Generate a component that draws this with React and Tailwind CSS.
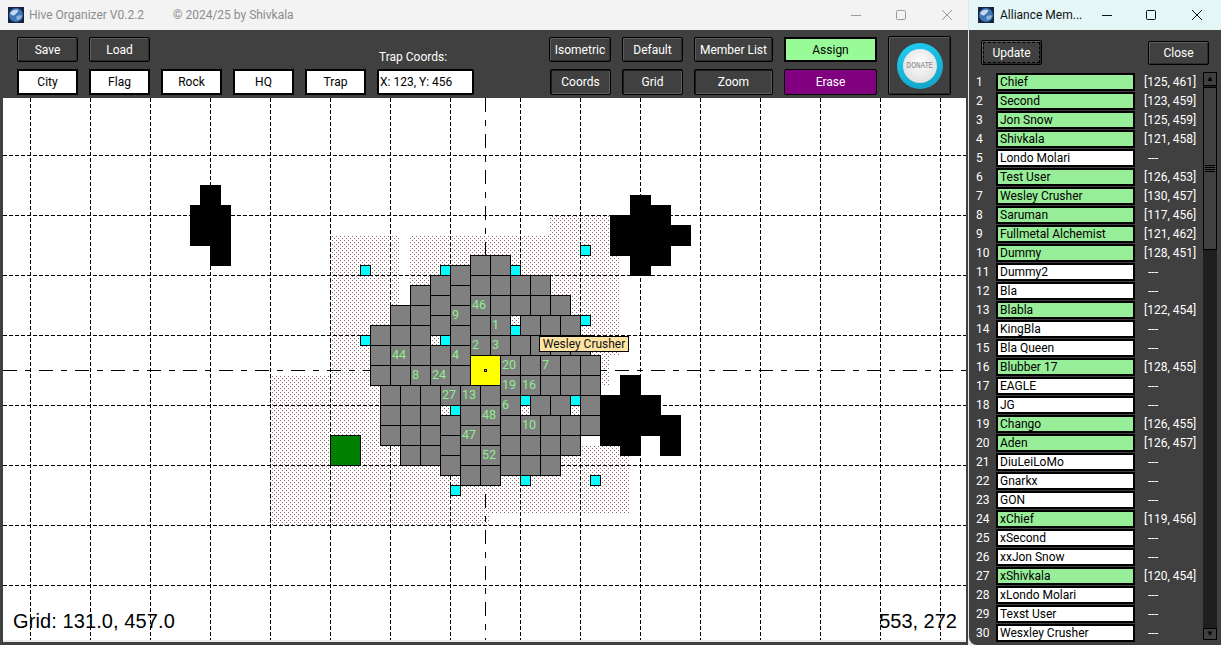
import React from 'react';

const members = [
  ['Chief', '[125, 461]'], ['Second', '[123, 459]'], ['Jon Snow', '[125, 459]'], ['Shivkala', '[121, 458]'],
  ['Londo Molari', null], ['Test User', '[126, 453]'], ['Wesley Crusher', '[130, 457]'], ['Saruman', '[117, 456]'],
  ['Fullmetal Alchemist', '[121, 462]'], ['Dummy', '[128, 451]'], ['Dummy2', null], ['Bla', null],
  ['Blabla', '[122, 454]'], ['KingBla', null], ['Bla Queen', null], ['Blubber 17', '[128, 455]'],
  ['EAGLE', null], ['JG', null], ['Chango', '[126, 455]'], ['Aden', '[126, 457]'],
  ['DiuLeiLoMo', null], ['Gnarkx', null], ['GON', null], ['xChief', '[119, 456]'],
  ['xSecond', null], ['xxJon Snow', null], ['xShivkala', '[120, 454]'], ['xLondo Molari', null],
  ['Texst User', null], ['Wesxley Crusher', null],
];

// grey cells of the hive: [x, y of the first cell, number of cells] per column
const columns = [
  [370, 325, 3], [390, 305, 4], [410, 285, 5], [430, 275, 3], [430, 345, 2], [450, 265, 6],
  [470, 255, 5], [490, 255, 5],
  [510, 275, 2], [530, 275, 2], [510, 335, 1], [530, 295, 1], [550, 295, 1],
  [520, 315, 1], [540, 315, 1], [560, 315, 1], [530, 335, 1], [550, 335, 1], [570, 335, 1],
  [500, 355, 6], [520, 355, 2], [540, 355, 2], [560, 355, 2], [580, 355, 3],
  [530, 395, 1], [550, 395, 1], [520, 415, 3], [540, 415, 3], [560, 415, 2], [580, 415, 1],
  [380, 385, 3], [400, 385, 4], [420, 385, 4], [440, 385, 1], [440, 415, 3],
  [460, 385, 1], [480, 385, 1], [460, 405, 4], [480, 405, 4],
];
const cells = columns.flatMap(([x, y, n]) => Array.from({ length: n }, (_, i) => [x, y + i * 20]));

const labels = [
  ['46', 470, 295], ['9', 450, 305], ['1', 490, 315], ['2', 470, 335], ['3', 490, 335], ['44', 390, 345],
  ['4', 450, 345], ['8', 410, 365], ['24', 430, 365], ['20', 500, 355], ['7', 540, 355], ['19', 500, 375],
  ['16', 520, 375], ['27', 440, 385], ['13', 460, 385], ['6', 500, 395], ['48', 480, 405], ['10', 520, 415],
  ['47', 460, 425], ['52', 480, 445],
];

const traps = [
  [360, 265], [360, 335], [440, 265], [510, 265], [580, 245], [580, 315], [510, 325], [440, 335],
  [520, 395], [570, 395], [450, 405], [520, 475], [450, 485], [590, 475],
];

const dotted = [
  [330, 235, 69, 140], [410, 235, 140, 70], [390, 305, 160, 70], [550, 215, 60, 40], [550, 255, 69, 100],
  [590, 355, 20, 30], [270, 375, 219, 150], [489, 385, 91, 129], [580, 445, 49, 69],
];

const rocks = [
  'M200 185h21v20h10v61h-21v-20h-20v-41h10z',
  'M630 195h21v10h20v20h20v21h-20v20h-20v10h-21v-20h-20v-41h20z',
  'M620 375h21v20h20v20h20v41h-21v-20h-19v20h-21v-10h-20v-51h20z',
];

const vLines = [30, 90, 150, 210, 270, 330, 390, 450, 520, 580, 640, 700, 760, 820, 880, 940];
const hLines = [155, 215, 275, 335, 405, 465, 525, 585];

const darkBtn = 'flex items-center justify-center bg-[#404040] text-white border border-black rounded-[2px] shadow-[inset_1px_1px_0_#5c5c5c,inset_-1px_-1px_0_#2a2a2a]';
const pressedBtn = 'flex items-center justify-center bg-[#404040] text-white border border-black rounded-[2px] shadow-[inset_1px_1px_0_#1c1c1c,inset_-1px_-1px_0_#5c5c5c]';
const whiteBtn = 'flex items-center justify-center bg-white text-black border-2 border-black';

function Globe() {
  return (
    <svg width="16" height="16" viewBox="0 0 16 16" className="shrink-0">
      <rect width="16" height="16" fill="#16243f" />
      <circle cx="8" cy="8" r="7" fill="#3f76b8" />
      <path d="M2 6c2-3 5-4 8-3 1 2-2 3-3 5-2 1-4 0-5-2z" fill="#c4d8ee" />
      <path d="M9 9c2-1 4-1 5 0-1 3-3 4-5 4-1-1-1-3 0-4z" fill="#8fb2d8" />
    </svg>
  );
}

function WinControls({ color, firstGap, secondGap }) {
  return (
    <div className="flex items-center">
      <svg width="10" height="10" viewBox="0 0 10 10"><path d="M0 5.5h10" stroke={color} /></svg>
      <svg width="10" height="10" viewBox="0 0 10 10" className={firstGap}><rect x=".5" y=".5" width="9" height="9" rx="1" fill="none" stroke={color} /></svg>
      <svg width="10" height="10" viewBox="0 0 10 10" className={secondGap}><path d="M0 0l10 10M10 0L0 10" stroke={color} /></svg>
    </div>
  );
}

function HiveMap() {
  return (
    <svg width="963" height="542" viewBox="3 98 963 542" className="block">
      <defs>
        <pattern id="stipple" width="4" height="4" patternUnits="userSpaceOnUse">
          <rect x="0" y="0" width="1" height="1" fill="#8f6467" />
          <rect x="2" y="2" width="1" height="1" fill="#8f6467" />
        </pattern>
      </defs>
      {dotted.map(([x, y, w, h], i) => (
        <rect key={i} x={x} y={y} width={w} height={h} fill="url(#stipple)" />
      ))}
      {vLines.map((x) => (
        <line key={x} x1={x + 0.5} x2={x + 0.5} y1="98" y2="640" stroke="#000" strokeDasharray="4 2" />
      ))}
      {hLines.map((y) => (
        <line key={y} x1="3" x2="966" y1={y + 0.5} y2={y + 0.5} stroke="#000" strokeDasharray="4 2" />
      ))}
      <line x1="485.5" x2="485.5" y1="98" y2="640" stroke="#000" strokeDasharray="14 8 6 8" />
      <line x1="3" x2="966" y1="370.5" y2="370.5" stroke="#000" strokeDasharray="14 8 6 8" />
      {cells.map(([x, y], i) => (
        <rect key={i} x={x + 0.5} y={y + 0.5} width="20" height="20" fill="#808080" stroke="#000" />
      ))}
      {traps.map(([x, y], i) => (
        <rect key={i} x={x + 0.5} y={y + 0.5} width="10" height="10" fill="#00ffff" stroke="#000" />
      ))}
      <rect x="330.5" y="435.5" width="30" height="30" fill="#008000" stroke="#000" />
      <rect x="470.5" y="355.5" width="30" height="30" fill="#ffff00" stroke="#000" />
      <rect x="484.5" y="369.5" width="2" height="2" fill="#ffff00" stroke="#000" />
      {rocks.map((d, i) => (
        <path key={i} d={d} fill="#000" />
      ))}
      {labels.map(([t, x, y]) => (
        <text key={t} x={x + 2} y={y + 14} fill="#90ee90" fontSize="12.5" fontFamily="Roboto, sans-serif">{t}</text>
      ))}
    </svg>
  );
}

export default function App() {
  return (
    <div className="flex w-[1221px] h-[645px] overflow-hidden bg-[#dfe9ea] text-[12px] font-['Roboto',sans-serif]">
      {/* main window */}
      <div className="w-[968px] h-full flex flex-col bg-[#404040]">
        <div className="h-[30px] shrink-0 flex items-center bg-[#f3f3f3] pl-[8px] pr-[16px] text-[#8c8c8c]">
          <Globe />
          <span className="ml-[5px] w-[144px]">Hive Organizer V0.2.2</span>
          <span>© 2024/25 by Shivkala</span>
          <div className="ml-auto">
            <WinControls color="#9a9a9a" firstGap="ml-[35px]" secondGap="ml-[36px]" />
          </div>
        </div>

        <div className="h-[68px] shrink-0 flex pl-[17px] pt-[7px]">
          <div className="grid grid-cols-[61px_61px_61px_61px_61px_97px] grid-rows-[25px_26px] gap-x-[11px] gap-y-[7px]">
            <button className={darkBtn}>Save</button>
            <button className={darkBtn}>Load</button>
            <span className="col-start-6 self-end pl-[2px] text-white leading-[16px] translate-y-[3px]">Trap Coords:</span>
            <button className={whiteBtn}>City</button>
            <button className={whiteBtn}>Flag</button>
            <button className={whiteBtn}>Rock</button>
            <button className={whiteBtn}>HQ</button>
            <button className={whiteBtn}>Trap</button>
            <div className="flex items-center bg-white text-black border-2 border-black rounded-[2px] pl-[1px]">X: 123, Y: 456</div>
          </div>
          <div className="ml-[75px] grid grid-cols-[62px_61px_79px_93px_63px] grid-rows-[25px_26px] gap-x-[11px] gap-y-[7px]">
            <button className={darkBtn}>Isometric</button>
            <button className={darkBtn}>Default</button>
            <button className={darkBtn}>Member List</button>
            <button className="flex items-center justify-center bg-[#98fb98] text-black border-2 border-black">Assign</button>
            <button className={`${darkBtn} col-start-5 row-start-1 row-span-2 -mt-[1px]`}>
              <span className="flex items-center justify-center w-[46px] h-[46px] rounded-full bg-[linear-gradient(160deg,#1fd0f5,#12a0c4)]">
                <span className="flex items-center justify-center w-[34px] h-[34px] rounded-full bg-[radial-gradient(circle_at_50%_40%,#ffffff,#d6d6d6)]">
                  <span className="text-[9px] font-bold text-[#9a9a9a] scale-x-[0.7] font-['Liberation_Sans',sans-serif]">DONATE</span>
                </span>
              </span>
            </button>
            <button className={`${pressedBtn} ml-[1px]`}>Coords</button>
            <button className={pressedBtn}>Grid</button>
            <button className={pressedBtn}>Zoom</button>
            <button className="flex items-center justify-center bg-[#800080] text-white border border-black rounded-[2px]">Erase</button>
          </div>
        </div>

        <div className="relative ml-[3px] w-[963px] h-[542px] bg-white font-['Liberation_Sans',sans-serif]">
          <HiveMap />
          <div className="absolute left-[536px] top-[238px] h-[16px] w-[90px] flex items-center justify-center bg-[#ffe4a3] border border-black text-[12px] text-[#111] font-['Roboto',sans-serif]">Wesley Crusher</div>
          <span className="absolute left-[10px] bottom-[7px] text-[20px] leading-[24px] tracking-[0.1px] text-black">Grid: 131.0, 457.0</span>
          <span className="absolute right-[9px] bottom-[7px] text-[20px] leading-[24px] text-black">553, 272</span>
        </div>
        <div className="ml-[3px] w-[963px] h-[2px] bg-[#ececec]" />
      </div>

      {/* member list window */}
      <div className="ml-[1px] w-[252px] h-full flex flex-col bg-[#404040] rounded-bl-[8px] overflow-hidden">
        <div className="h-[30px] shrink-0 flex items-center bg-[#e4f6f6] pl-[9px] pr-[19px] text-[#111]">
          <Globe />
          <span className="ml-[6px]">Alliance Mem...</span>
          <div className="ml-auto">
            <WinControls color="#111" firstGap="ml-[34px]" secondGap="ml-[36px]" />
          </div>
        </div>
        <div className="h-[42px] shrink-0 flex items-start pt-[10px] pl-[12px] pr-[12px] justify-between">
          <button className={`${darkBtn} w-[61px] h-[25px] outline-1 outline-dashed outline-black -outline-offset-[3px]`}>Update</button>
          <button className={`${darkBtn} w-[61px] h-[24px] mt-[1px]`}>Close</button>
        </div>
        <div className="flex flex-1 min-h-0">
          <div className="w-[234px] flex flex-col">
            {members.map(([name, coords], i) => (
              <div key={name} className="h-[19px] shrink-0 flex items-center text-white">
                <span className="w-[27px] shrink-0 pl-[7px]">{i + 1}</span>
                <div className={`w-[139px] h-[18px] shrink-0 flex items-center pl-[2px] text-black border-2 border-black ${coords ? 'bg-[#98ee98]' : 'bg-white'}`}>{name}</div>
                <span className={`ml-[9px] ${coords ? '' : 'pl-[4px]'}`}>{coords || '---'}</span>
              </div>
            ))}
          </div>
          <div className="w-[14px] flex flex-col bg-[#1f1f1f] h-[568px]">
            <div className="h-[14px] shrink-0 flex items-center justify-center bg-[#404040] border border-black text-[8px] leading-none text-black">▲</div>
            <div className="h-[163px] shrink-0 mt-[1px] flex flex-col items-center justify-center gap-[1px] bg-[#404040] border border-black">
              <div className="w-[10px] h-[1px] bg-black" />
              <div className="w-[10px] h-[1px] bg-black" />
              <div className="w-[10px] h-[1px] bg-black" />
              <div className="w-[10px] h-[1px] bg-black" />
            </div>
            <div className="flex-1" />
            <div className="h-[12px] shrink-0 flex items-center justify-center bg-[#404040] border border-black text-[8px] leading-none text-black">▼</div>
          </div>
        </div>
      </div>
    </div>
  );
}
